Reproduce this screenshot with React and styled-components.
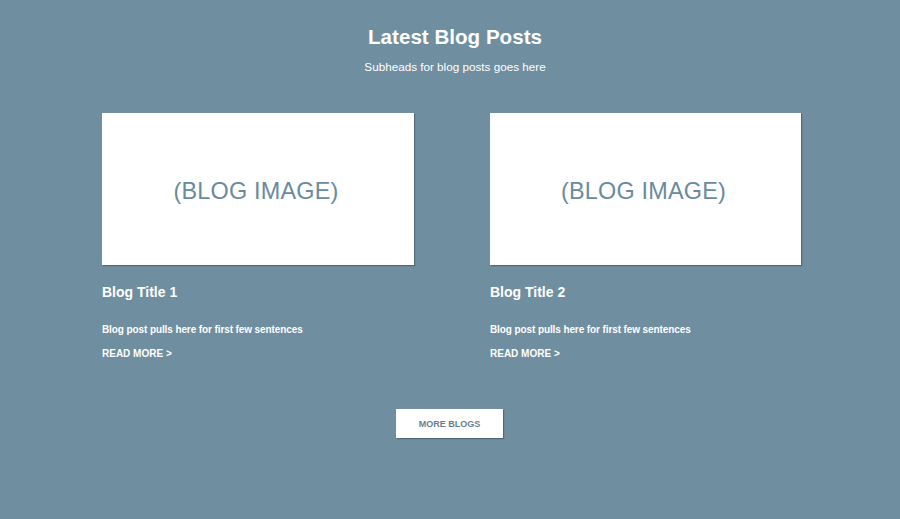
import React from 'react';
import styled, { createGlobalStyle } from 'styled-components';

const Global = createGlobalStyle`
    html, body {
        margin:0;
        padding:0;
        background:#6f8ea0;
    }
    body {
        font-family:"Liberation Sans", Arial, sans-serif;
    }
`;

const Section = styled.section`
    width:900px;
    height:519px;
    box-sizing:border-box;
    padding-top:25px;
    background:#6f8ea0;
    color:#fff;
    display:flex;
    flex-direction:column;
    align-items:center;
`;

const Heading = styled.h2`
    margin:0;
    font-size:20.6px;
    font-weight:bold;
    line-height:24px;
    padding-left:10px;
`;

const Sub = styled.p`
    margin:10px 0 0 0;
    font-size:11.7px;
    line-height:16px;
    padding-left:10px;
`;

const Grid = styled.div`
    margin-top:38px;
    display:grid;
    grid-template-columns:312px 311px;
    column-gap:76px;
    margin-left:3px;
`;

const Card = styled.article`
    display:flex;
    flex-direction:column;
`;

const Image = styled.div`
    height:152px;
    box-sizing:border-box;
    padding:4px 4px 0 0;
    background:#fff;
    box-shadow:1px 1px 1px rgba(60,80,95,0.55);
    display:flex;
    align-items:center;
    justify-content:center;
    color:#6a8a9e;
    font-size:23.4px;
    letter-spacing:0.2px;
`;

const Title = styled.h3`
    margin:18px 0 0 0;
    font-size:14px;
    line-height:18px;
    font-weight:bold;
`;

const Excerpt = styled.p`
    margin:22px 0 0 0;
    font-size:10px;
    line-height:14px;
    font-weight:bold;
    letter-spacing:-0.1px;
`;

const ReadMore = styled.a`
    margin-top:10px;
    font-size:10px;
    line-height:14px;
    font-weight:bold;
    color:#fff;
    text-decoration:none;
`;

const MoreButton = styled.button`
    margin-top:48px;
    margin-left:-1px;
    width:107px;
    height:29px;
    border:none;
    background:#fff;
    box-shadow:1px 1px 1px rgba(60,80,95,0.6);
    color:#5f7f94;
    font-family:"Liberation Sans", Arial, sans-serif;
    font-size:9px;
    font-weight:bold;
    cursor:pointer;
`;

const posts = [
    { id:1, title:'Blog Title 1' },
    { id:2, title:'Blog Title 2' },
];

function App() {
    return(
        <>
        <Global/>
        <Section>
            <Heading>Latest Blog Posts</Heading>
            <Sub>Subheads for blog posts goes here</Sub>
            <Grid>
                {posts.map(post => (
                    <Card key={post.id}>
                        <Image>(BLOG IMAGE)</Image>
                        <Title>{post.title}</Title>
                        <Excerpt>Blog post pulls here for first few sentences</Excerpt>
                        <ReadMore href="#">READ MORE &gt;</ReadMore>
                    </Card>
                ))}
            </Grid>
            <MoreButton>MORE BLOGS</MoreButton>
        </Section>
        </>
    );
}
export default App;
